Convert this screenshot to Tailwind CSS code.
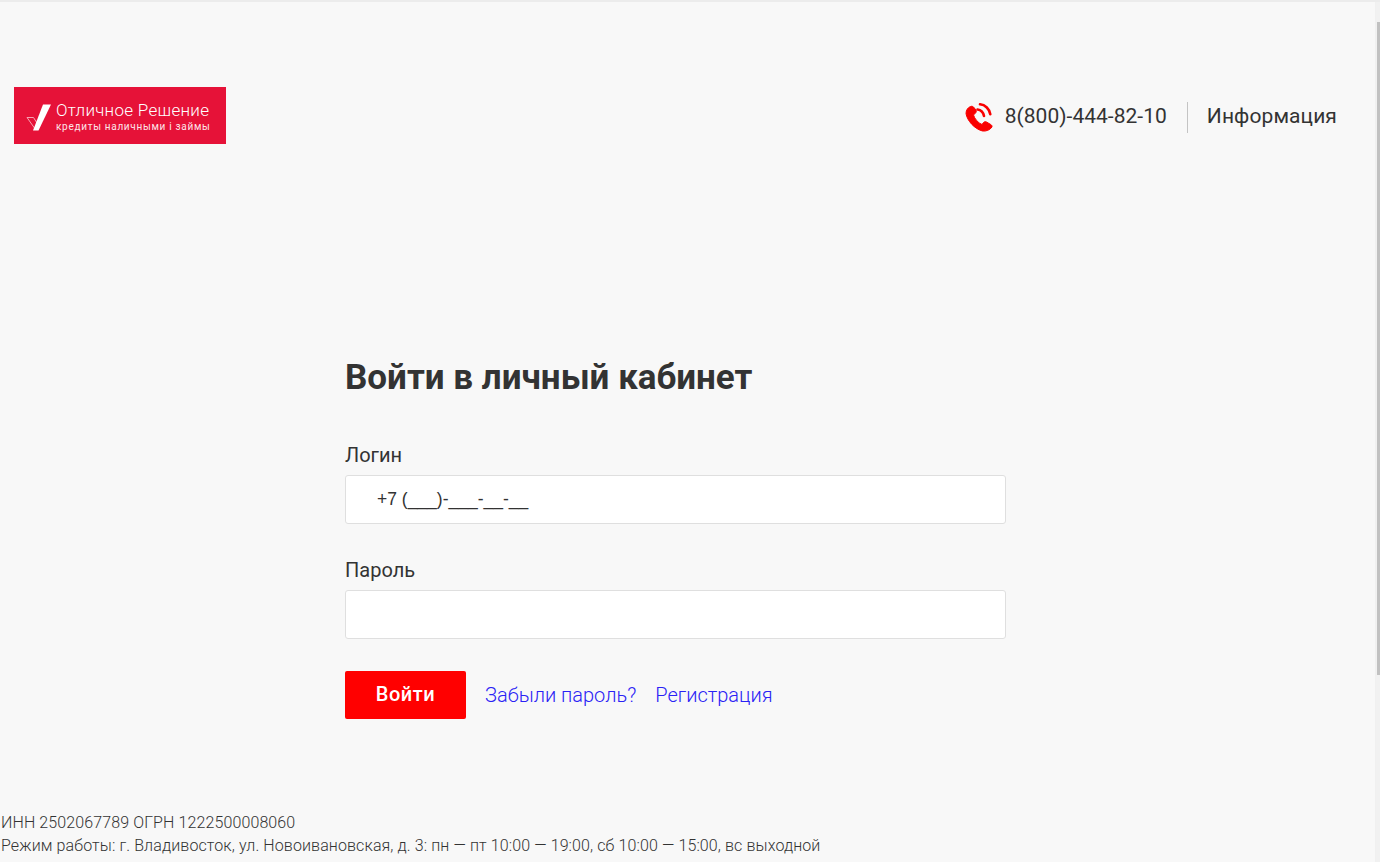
<!DOCTYPE html>
<html lang="ru">
<head>
  <meta charset="UTF-8" />
  <meta name="viewport" content="width=device-width, initial-scale=1.0" />
  <title>Войти в личный кабинет</title>
  <script src="https://cdn.jsdelivr.net/npm/@tailwindcss/browser@4"></script>
</head>
<body class="h-[862px] overflow-hidden bg-[#f8f8f8] font-[Roboto,sans-serif] text-[#333]">
  <div class="flex h-full border-t-2 border-[#ececec]">
    <div class="flex min-w-0 flex-1 flex-col">

      <!-- Header -->
      <header class="flex h-[142px] items-end justify-between">
        <a href="#" class="ml-[14px] flex h-[57px] w-[212px] items-center bg-[#e61238] pt-[2px] pl-[12px] text-white">
          <svg class="h-[28px] w-[28px] shrink-0" viewBox="0 0 28 28" fill="none">
            <path d="M1 14.500h6.500l6 9.500-4 2.500z" stroke="#f7a3b3" stroke-width="1" />
            <path d="M17 1.500h8L12.500 27.500H7z" fill="#fff" />
          </svg>
          <div class="ml-[2px] flex flex-col">
            <span class="text-[17px] leading-[20px] font-light tracking-[0.3px] text-[#fff]">Отличное Решение</span>
            <span class="text-[10px] leading-[13px] tracking-[0.7px] text-[#fde4e9]">кредиты наличными і займы</span>
          </div>
        </a>
        <div class="mr-[38px] mb-[11px] flex h-[32px] items-center">
          <svg class="h-[30px] w-[28px] shrink-0" viewBox="0 0 28 30" fill="none">
            <path d="M5.500 4.500C3 5.500 1 8 1 11.500c1 7 8.500 15.500 16.500 17.500 3.500.5 7.500-1 9.500-4 .2-1-.3-2-1.300-2.500L21.500 20c-1-.5-2-.5-3 .5l-1.500 2c-4-1.500-7.500-6-8.500-9.500l2-2c1-1 1-2 .5-3L8.500 5c-.7-.7-2-.9-3-.5z" fill="#f90000" stroke="#f90000" stroke-width="1" />
            <path d="M12.500 7.500c3.200.4 5.800 3 6.500 6.500M15 2.300c5.200.5 9.500 4.700 10.300 9.900" stroke="#f90000" stroke-width="2.600" stroke-linecap="round" />
          </svg>
          <a href="#" class="ml-[12px] text-[21px] tracking-[0.02px]">8(800)-444-82-10</a>
          <span class="mr-[19px] ml-[20px] h-[31px] w-px bg-[#c4c4c4]"></span>
          <a href="#" class="text-[21px] tracking-[0.1px]">Информация</a>
        </div>
      </header>

      <!-- Login form -->
      <main class="ml-[345px] w-[661px] flex-1 pt-[212px]">
        <h1 class="text-[35px] leading-[44px] font-bold">Войти в личный кабинет</h1>
        <form class="mt-[43px] flex flex-col">
          <label class="text-[20px] leading-[24px]" for="login">Логин</label>
          <input id="login" type="text" value="+7 (___)-___-__-__" class="mt-[8px] h-[49px] w-full rounded-[3px] border border-[#dfdfdf] bg-white pl-[31px] font-['Liberation_Sans',sans-serif] text-[17.5px]" />
          <label class="mt-[34px] text-[20px] leading-[24px]" for="password">Пароль</label>
          <input id="password" type="password" class="mt-[8px] h-[49px] w-full rounded-[3px] border border-[#dfdfdf] bg-white" />
          <div class="mt-[32px] flex items-center">
            <button type="button" class="h-[48px] w-[121px] rounded-[2px] bg-[#ff0000] pb-[2px] text-[20px] font-medium tracking-[0.5px] text-white">Войти</button>
            <a href="#" class="ml-[19px] text-[20px] font-light text-[#2a22f5]">Забыли пароль?</a>
            <a href="#" class="ml-[19px] text-[20px] font-light text-[#2a22f5]">Регистрация</a>
          </div>
        </form>
      </main>

      <!-- Footer -->
      <footer class="pb-[5px] pl-[1px] text-[16px] leading-[23px] font-light tracking-[0.11px]">
        <p>ИНН 2502067789 ОГРН 1222500008060</p>
        <p>Режим работы: г. Владивосток, ул. Новоивановская, д. 3: пн — пт 10:00 — 19:00, сб 10:00 — 15:00, вс выходной</p>
      </footer>
    </div>

    <!-- Scrollbar -->
    <div class="w-[5px] shrink-0 border-l border-[#f0f0f0] bg-[#f1f1f1] pt-[20px] pl-[1px]">
      <div class="h-[653px] bg-[#c1c1c1]"></div>
    </div>
  </div>
</body>
</html>
